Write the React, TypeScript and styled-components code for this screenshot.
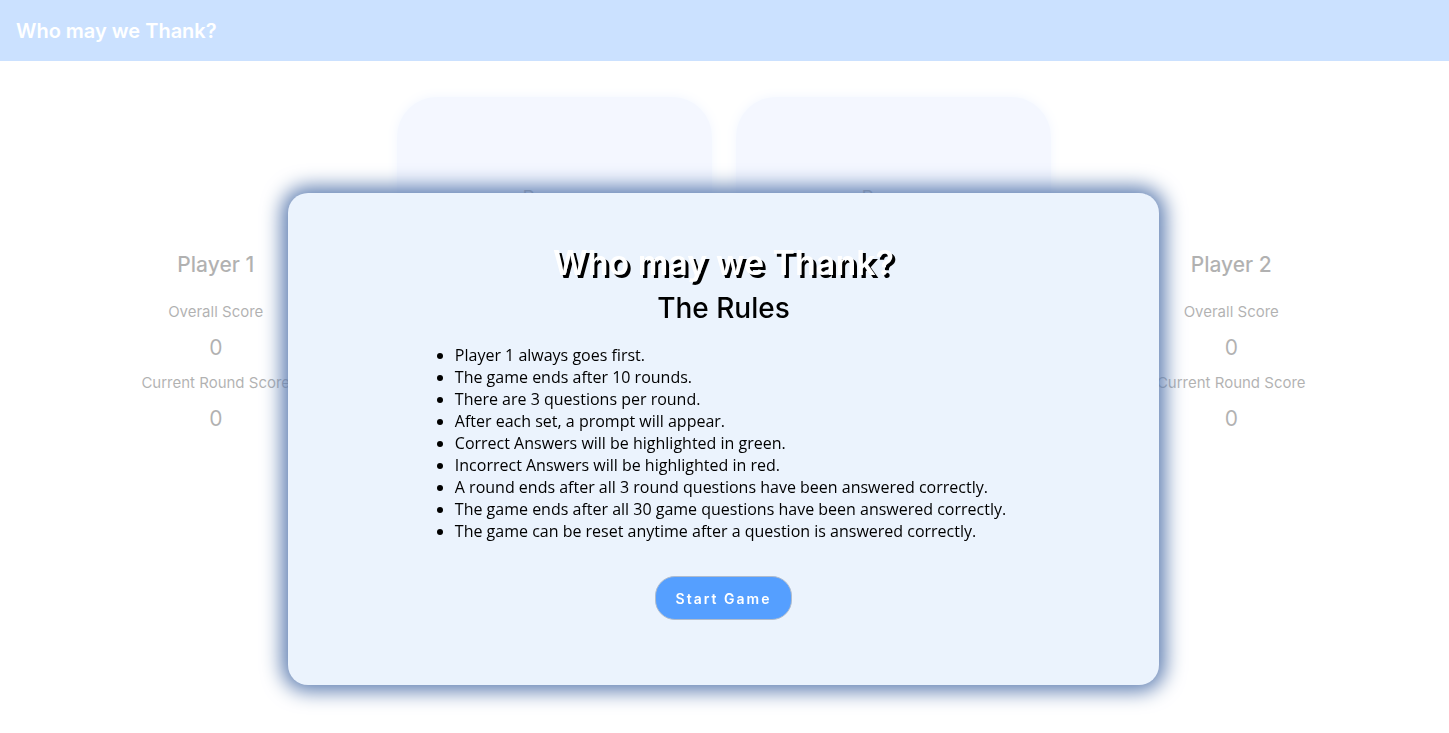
import React from "react";
import styled, { createGlobalStyle } from "styled-components";

const display = `Inter, "Liberation Sans", sans-serif`;

const GlobalStyle = createGlobalStyle`
  *, *::before, *::after { box-sizing: border-box; }
  body { margin: 0; background: #fff; color: #000; font-family: "Open Sans", sans-serif; }
  h1, h2, h3, p { margin: 0; }
`;

const Page = styled.div`
  min-height: 100vh;
  overflow: hidden;
`;

const Game = styled.div`
  opacity: 0.3;
  font-family: ${display};
`;

const Header = styled.header`
  display: flex;
  align-items: center;
  height: 61px;
  padding: 0 16px;
  background: #559fff;
`;

const Brand = styled.h1`
  font-size: 20px;
  line-height: 28px;
  font-weight: 600;
  color: #fff;
`;

const Board = styled.main`
  display: grid;
  grid-template-columns: 1fr 678px 1fr;
  padding: 36px 49px 0 47px;
`;

const Player = styled.section`
  display: flex;
  flex-direction: column;
  align-items: center;
  padding-top: 152px;
  text-align: center;
  white-space: nowrap;
`;

const PlayerName = styled.h2`
  margin-bottom: 19px;
  font-size: 21px;
  line-height: 32px;
  font-weight: 500;
`;

const ScoreLabel = styled.p`
  font-size: 15px;
  line-height: 24px;
`;

const Score = styled.p`
  font-size: 21px;
  line-height: 47px;
`;

const Cards = styled.div`
  display: grid;
  grid-template-columns: 1fr 1fr;
  gap: 24px;
  padding: 0 12px;
`;

const Card = styled.article`
  display: flex;
  justify-content: center;
  height: 240px;
  padding-top: 89px;
  border-radius: 40px;
  background: #dbe8ff;
  box-shadow: 0 0 8px 1px #dbe8ff;
  font-size: 19px;
  line-height: 24px;
`;

const Overlay = styled.div`
  position: fixed;
  inset: 0;
  display: flex;
  justify-content: center;
  align-items: flex-start;
  padding: 193px 2px 0 0;
`;

const Dialog = styled.section`
  display: flex;
  flex-direction: column;
  align-items: center;
  width: calc(60% + 3px);
  padding: 46px 24px 65px;
  border-radius: 20px;
  background: #ebf3fd;
  box-shadow: 0 0 20px 6px #5c7cb0;
`;

const Title = styled.h2`
  font-family: ${display};
  font-size: 34px;
  line-height: 48px;
  font-weight: 600;
  color: #fff;
  text-shadow: 3px 3px 0 #000;
`;

const Subtitle = styled.h3`
  font-family: ${display};
  font-size: 28px;
  line-height: 42px;
  font-weight: 500;
`;

const Rules = styled.ul`
  margin: 15px 0 34px;
  padding: 0 26px 0 40px;
  font-size: 16px;
  line-height: 22px;
`;

const StartButton = styled.button`
  height: 44px;
  padding: 0 20px;
  border: 1px solid #b0bccd;
  border-radius: 20px;
  background: #559fff;
  color: #fff;
  font-family: ${display};
  font-size: 14px;
  font-weight: 600;
  letter-spacing: 2px;
`;

const rules = [
  "Player 1 always goes first.",
  "The game ends after 10 rounds.",
  "There are 3 questions per round.",
  "After each set, a prompt will appear.",
  "Correct Answers will be highlighted in green.",
  "Incorrect Answers will be highlighted in red.",
  "A round ends after all 3 round questions have been answered correctly.",
  "The game ends after all 30 game questions have been answered correctly.",
  "The game can be reset anytime after a question is answered correctly.",
];

function PlayerPanel({ name }: { name: string }) {
  return (
    <Player>
      <PlayerName>{name}</PlayerName>
      <ScoreLabel>Overall Score</ScoreLabel>
      <Score>0</Score>
      <ScoreLabel>Current Round Score</ScoreLabel>
      <Score>0</Score>
    </Player>
  );
}

export default function App() {
  return (
    <Page>
      <GlobalStyle />
      <Game>
        <Header>
          <Brand>Who may we Thank?</Brand>
        </Header>
        <Board>
          <PlayerPanel name="Player 1" />
          <Cards>
            <Card>Person</Card>
            <Card>Person</Card>
          </Cards>
          <PlayerPanel name="Player 2" />
        </Board>
      </Game>
      <Overlay>
        <Dialog role="dialog" aria-labelledby="dialog-title">
          <Title id="dialog-title">Who may we Thank?</Title>
          <Subtitle>The Rules</Subtitle>
          <Rules>
            {rules.map((rule) => (
              <li key={rule}>{rule}</li>
            ))}
          </Rules>
          <StartButton type="button">Start Game</StartButton>
        </Dialog>
      </Overlay>
    </Page>
  );
}
